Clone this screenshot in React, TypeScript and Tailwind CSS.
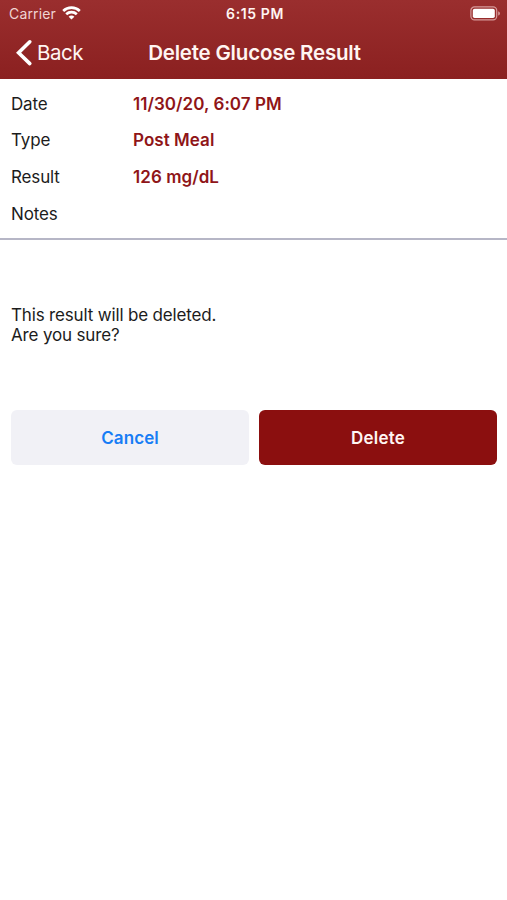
import React from 'react';

const rows = [
  { label: 'Date', value: '11/30/20, 6:07 PM' },
  { label: 'Type', value: 'Post Meal' },
  { label: 'Result', value: '126 mg/dL' },
  { label: 'Notes', value: '' },
];

const WifiIcon: React.FC = () => (
  <svg width="19" height="15" viewBox="0 0 19 15" fill="none" stroke="#fff" strokeWidth="2.7">
    <path d="M1.2 4.9C5.8 0.6 13.2 0.6 17.8 4.9" />
    <path d="M4.2 8.3C7.2 5.5 11.8 5.5 14.8 8.3" />
    <path d="M9.5 13.6L6.6 10.7C8.2 9.2 10.8 9.2 12.4 10.7Z" fill="#fff" stroke="none" />
  </svg>
);

const BatteryIcon: React.FC = () => (
  <svg width="31" height="15" viewBox="0 0 31 15" fill="none">
    <rect x="0.9" y="0.9" width="25.8" height="13" rx="3.6" stroke="#d69a9a" strokeWidth="1.2" />
    <rect x="2.8" y="2.8" width="22" height="9.2" rx="1.8" fill="#fff" />
    <path d="M28.2 5.2C30.5 6 30.5 8.8 28.2 9.6Z" fill="#d69a9a" />
  </svg>
);

const Header: React.FC = () => (
  <header className="h-[79px] bg-gradient-to-b from-[#9a2e2e] to-[#8b2020] text-[#fff5f2]">
    {/* Status bar */}
    <div className="grid h-[27px] grid-cols-[1fr_auto_1fr] items-center pl-[9px] pr-[6px]">
      <div className="flex items-center gap-[6px]">
        <span className="text-[14px] leading-[27px] tracking-[0.15px] text-[#f0d4d2]">Carrier</span>
        <WifiIcon />
      </div>
      <span className="text-[14px] leading-[27px] font-semibold tracking-[0.6px]">6:15 PM</span>
      <div className="flex justify-end">
        <BatteryIcon />
      </div>
    </div>

    {/* Navigation bar */}
    <div className="grid h-[51px] grid-cols-[1fr_auto_1fr] items-center pl-[15px] pr-[13px]">
      <button className="flex items-center gap-[4px]">
        <svg width="18" height="28" viewBox="0 0 18 28" fill="none" stroke="#fff" strokeWidth="3.6" strokeLinecap="round">
          <path d="M14.8 2.8L3.6 13.7L14.8 24.6" />
        </svg>
        <span className="text-[20.5px] leading-6 tracking-[-0.5px]">Back</span>
      </button>
      <h1 className="text-[20.5px] leading-6 font-semibold tracking-[-0.2px]">Delete Glucose Result</h1>
    </div>
  </header>
);

const App: React.FC = () => {
  return (
    <div className="min-h-[900px] w-full bg-white font-['Inter',sans-serif] text-[17px] text-[#1c1c1c]">
      <Header />

      {/* Result details */}
      <dl className="h-[161px] border-b-2 border-[#b6b6c6] pt-[7px] pl-[11px]">
        {rows.map((row) => (
          <div key={row.label} className="flex h-[36.7px] items-center">
            <dt className="w-[122px] tracking-[-0.15px]">{row.label}</dt>
            <dd className="font-semibold tracking-[0.05px] text-[#8f1518]">{row.value}</dd>
          </div>
        ))}
      </dl>

      <p className="pt-[65px] pl-[11px] leading-[20px] tracking-[-0.16px]">
        This result will be deleted.
        <br />
        Are you sure?
      </p>

      {/* Actions */}
      <div className="mt-[65px] flex gap-[10px] pr-[10px] pl-[11px]">
        <button className="h-[55px] flex-1 rounded-[6px] bg-[#f1f1f6] pt-[2px] font-semibold tracking-[0.1px] text-[#177df5]">
          Cancel
        </button>
        <button className="h-[55px] flex-1 rounded-[6px] bg-[#8b0f0f] pt-[2px] font-semibold tracking-[0.2px] text-[#fff5f2]">
          Delete
        </button>
      </div>
    </div>
  );
};

export default App;
